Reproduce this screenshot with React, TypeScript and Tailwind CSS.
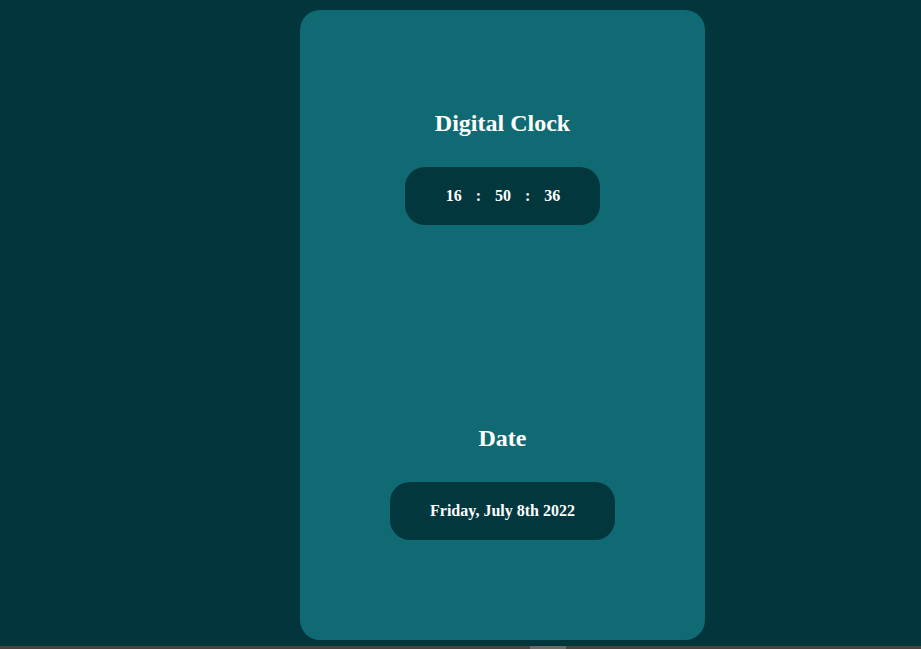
const serif = { fontFamily: '"Liberation Serif", "Times New Roman", serif' };

const Pill = ({ children, width }: { children: React.ReactNode; width: string }) => (
  <div
    className={`${width} h-[58px] rounded-[20px] bg-[#02373e] flex items-center justify-center text-white font-bold text-[16px]`}
  >
    {children}
  </div>
);

export default function App() {
  return (
    <div className="h-[649px] w-full bg-[#02353c] flex flex-col overflow-hidden" style={serif}>
      <div className="flex pt-[10px]">
        {/* card */}
        <div className="w-[405px] h-[630px] ml-[300px] rounded-[20px] bg-[#0f6a74] flex flex-col items-center pt-[98px]">
          <h1 className="text-[24px] leading-[30px] font-bold text-white">Digital Clock</h1>
          <div className="mt-[29px]">
            <Pill width="w-[195px]">
              <div className="flex items-center gap-[14px] pl-[1px]">
                <span>16</span>
                <span>:</span>
                <span>50</span>
                <span>:</span>
                <span>36</span>
              </div>
            </Pill>
          </div>

          <h2 className="mt-[198px] text-[24px] leading-[30px] font-bold text-white">Date</h2>
          <div className="mt-[29px]">
            <Pill width="w-[225px]">Friday, July 8th 2022</Pill>
          </div>
        </div>
      </div>

      {/* bottom strip */}
      <div className="mt-auto h-[3px] bg-[#4a4338] flex">
        <div className="ml-[530px] w-[36px] bg-[#6c6862]" />
      </div>
    </div>
  );
}
